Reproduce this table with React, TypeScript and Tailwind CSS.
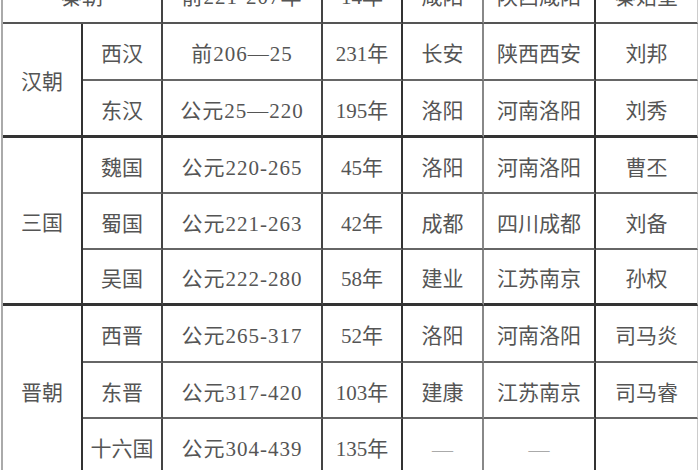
import React from "react";

type C = { t: string; c: string };

const B2 = "border-b-[2px] border-b-[#666]";
const B3 = "border-b-[3px] border-b-[#333]";
const B1 = "border-b-[2px] border-b-[#555]";
const R = [
  "border-r-[2px] border-r-[#333]",
  "border-r-[2px] border-r-[#444]",
  "border-r-[2px] border-r-[#444] tracking-[1px]",
  "border-r-[2px] border-r-[#333]",
  "border-r-[2px] border-r-[#888]",
  "border-r-[2px] border-r-[#333]",
  "border-r-[1px] border-r-[#ccc]",
];

function row(vals: string[], b: string, start: number): C[] {
  return vals.map((t, i) => ({ t, c: `${R[start + i]} ${b}` }));
}

const cells: C[] = [
  { t: "秦朝", c: `col-span-2 ${R[1]} ${B1}` },
  ...row(["前221-207年", "14年", "咸阳", "陕西咸阳", "秦始皇"], B1, 2),
  { t: "汉朝", c: `row-span-2 ${R[0]} ${B3}` },
  ...row(["西汉", "前206—25", "231年", "长安", "陕西西安", "刘邦"], B2, 1),
  ...row(["东汉", "公元25—220", "195年", "洛阳", "河南洛阳", "刘秀"], B3, 1),
  { t: "三国", c: `row-span-3 ${R[0]} ${B3}` },
  ...row(["魏国", "公元220-265", "45年", "洛阳", "河南洛阳", "曹丕"], B2, 1),
  ...row(["蜀国", "公元221-263", "42年", "成都", "四川成都", "刘备"], B2, 1),
  ...row(["吴国", "公元222-280", "58年", "建业", "江苏南京", "孙权"], B3, 1),
  { t: "晋朝", c: `row-span-3 ${R[0]} ${B2}` },
  ...row(["西晋", "公元265-317", "52年", "洛阳", "河南洛阳", "司马炎"], B2, 1),
  ...row(["东晋", "公元317-420", "103年", "建康", "江苏南京", "司马睿"], B2, 1),
  ...row(["十六国", "公元304-439", "135年", "—", "—", ""], B2, 1),
];

export default function App() {
  return (
    <div className="w-[700px] h-[470px] overflow-hidden bg-white font-['Liberation_Serif','Noto_Sans_CJK_SC',serif]">
      <div className="grid w-max ml-[1px] mt-[-33px] border-l-[2px] border-l-[#aaa] grid-cols-[80px_80px_160px_80px_81px_112px_102px] grid-rows-[57px_57px_57px_56px_56px_56px_57px_56px_57px]">
        {cells.map((cell, i) => (
          <div
            key={i}
            className={`flex items-center justify-center text-[21px] leading-none text-[#555] ${cell.c}`}
          >
            <span className={cell.t === "—" ? "pt-[7px] text-[#aaa]" : "pt-[6px]"}>{cell.t}</span>
          </div>
        ))}
      </div>
    </div>
  );
}
